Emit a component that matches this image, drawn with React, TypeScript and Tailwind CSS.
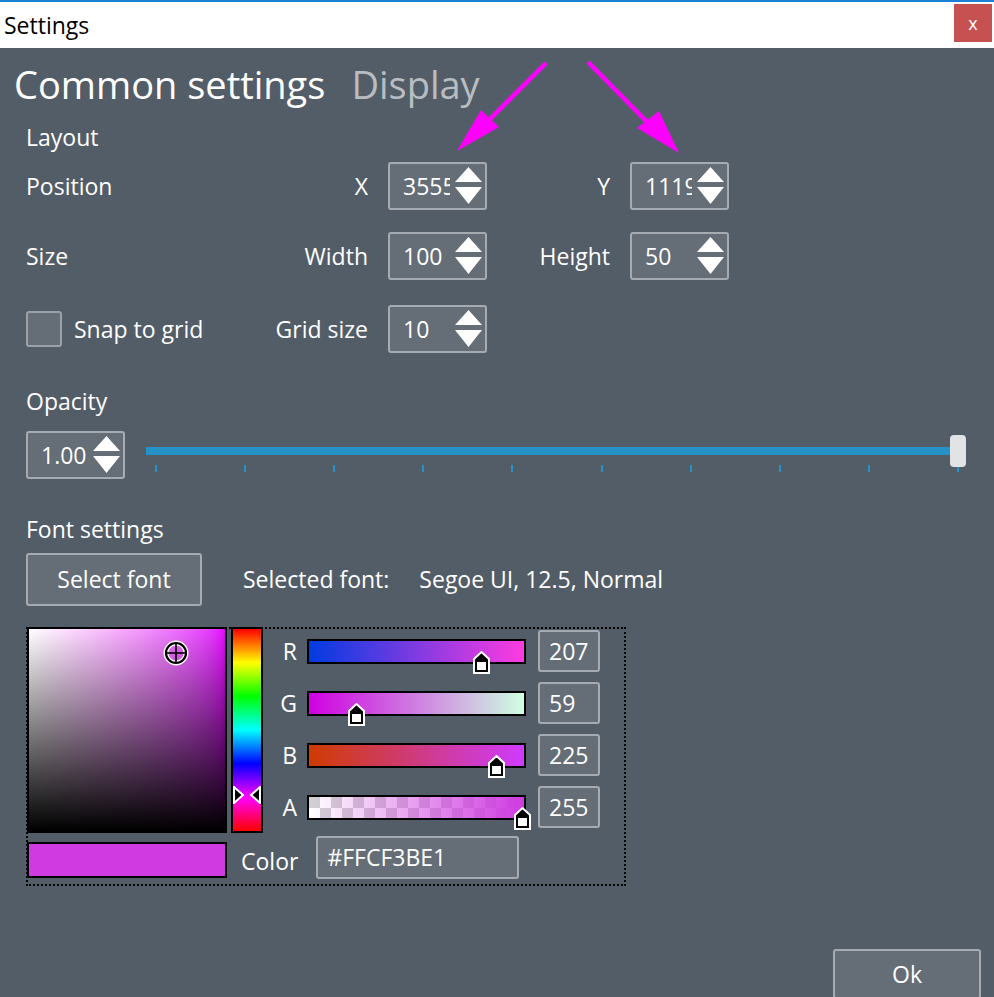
import React from "react";

const FONT = "font-['Open_Sans','Noto_Sans',sans-serif]";

function Arrows() {
  return (
    <svg width="27" height="38" viewBox="0 0 27 38" className="shrink-0">
      <polygon points="13.5,0 27,15 0,15" fill="#ffffff" />
      <polygon points="0,20 27,20 13.5,37" fill="#ffffff" />
    </svg>
  );
}

function Spin({ value, pl = "pl-[11px]" }: { value: string; pl?: string }) {
  return (
    <div
      className={`flex h-[48px] w-[99px] shrink-0 items-center rounded-[3px] border-2 border-[#a6abb1] bg-[#656d76] ${pl} pr-[3px]`}
    >
      <div className="mr-[5px] min-w-0 flex-1 overflow-hidden whitespace-nowrap text-[23px] leading-none text-white">
        {value}
      </div>
      <Arrows />
    </div>
  );
}

function Thumb({ value }: { value: number }) {
  const left = (value / 255) * 215 - 8.5 - 2;
  return (
    <svg
      width="17"
      height="23"
      viewBox="0 0 17 23"
      className="absolute top-[10px]"
      style={{ left }}
    >
      <path d="M8.5 1 L16 8 V22 H1 V8 Z" fill="#000000" stroke="#ffffff" strokeWidth="2" strokeLinejoin="miter" />
      <rect x="4" y="11" width="9" height="8" fill="#ffffff" />
    </svg>
  );
}

function ChannelRow({
  label,
  value,
  barClass,
  alpha,
}: {
  label: string;
  value: number;
  barClass: string;
  alpha?: boolean;
}) {
  return (
    <div className="flex h-[42px] items-center">
      <div className="w-[30px] text-right text-[23px] leading-none text-white">{label}</div>
      <div className="relative ml-[10px] h-[25px] w-[219px] border-2 border-black">
        {alpha ? (
          <div className="h-full w-full bg-[repeating-conic-gradient(#ffffff_0%_25%,#d2d2d2_0%_50%)] bg-[length:22px_22px]">
            <div className={`h-full w-full ${barClass}`} />
          </div>
        ) : (
          <div className={`h-full w-full ${barClass}`} />
        )}
        <Thumb value={value} />
      </div>
      <div className="ml-[12px] flex h-[42px] w-[62px] items-center rounded-[3px] border-2 border-[#a6abb1] bg-[#656d76] pl-[9px] text-[23px] leading-none text-white">
        {value}
      </div>
    </div>
  );
}

export default function App() {
  return (
    <div className={`relative flex h-[997px] w-[994px] flex-col overflow-hidden bg-[#535d68] ${FONT}`}>
      {/* Title bar */}
      <div className="flex h-[48px] shrink-0 items-start border-t-2 border-[#1c7fd6] bg-white">
        <div className="ml-[4px] mt-[9px] text-[23px] leading-[28px] text-black">Settings</div>
        <div className="ml-auto mr-[2px] mt-[2px] flex h-[38px] w-[38px] items-center justify-center bg-[#c75050] text-[18px] leading-none text-white">
          x
        </div>
      </div>

      {/* Body */}
      <div className="flex flex-1 flex-col text-white">
        <div className="ml-[14px] mt-[12px] flex items-baseline text-[38px] leading-[48px]">
          <span className="text-white">Common settings</span>
          <span className="ml-[26px] text-[#b9bdc2]">Display</span>
        </div>

        <div className="ml-[26px] mt-[15px] text-[23px] leading-[28px]">Layout</div>

        {/* Position row */}
        <div className="ml-[26px] mt-[11px] flex h-[48px] items-center text-[23px]">
          <div className="flex w-[342px] items-center justify-between">
            <span>Position</span>
            <span>X</span>
          </div>
          <div className="ml-[20px]">
            <Spin value="3555" pl="pl-[13px]" />
          </div>
          <div className="w-[123px] text-right">Y</div>
          <div className="ml-[20px]">
            <Spin value="1119" pl="pl-[13px]" />
          </div>
        </div>

        {/* Size row */}
        <div className="ml-[26px] mt-[22px] flex h-[48px] items-center text-[23px]">
          <div className="flex w-[342px] items-center justify-between">
            <span>Size</span>
            <span>Width</span>
          </div>
          <div className="ml-[20px]">
            <Spin value="100" pl="pl-[13px]" />
          </div>
          <div className="w-[123px] text-right">Height</div>
          <div className="ml-[20px]">
            <Spin value="50" pl="pl-[13px]" />
          </div>
        </div>

        {/* Snap row */}
        <div className="ml-[26px] mt-[25px] flex h-[48px] items-center text-[23px]">
          <div className="flex w-[342px] items-center justify-between">
            <div className="flex items-center">
              <div className="h-[36px] w-[36px] rounded-[3px] border-2 border-[#9ba1a7] bg-[#656d76]" />
              <span className="ml-[12px]">Snap to grid</span>
            </div>
            <span>Grid size</span>
          </div>
          <div className="ml-[20px]">
            <Spin value="10" pl="pl-[13px]" />
          </div>
        </div>

        <div className="ml-[26px] mt-[34px] text-[23px] leading-[28px]">Opacity</div>

        {/* Opacity row */}
        <div className="ml-[26px] mr-[28px] mt-[16px] flex h-[48px]">
          <Spin value="1.00" pl="pl-[13px]" />
          <div className="relative ml-[21px] h-[48px] flex-1">
            <div className="mr-[9px] mt-[16px] h-[8px] bg-[#2592c8]" />
            <div className="ml-[9px] mr-[7px] mt-[10px] flex justify-between">
              {Array.from({ length: 10 }).map((_, i) => (
                <div key={i} className="h-[7px] w-[2px] bg-[#2592c8]" />
              ))}
            </div>
            <div className="absolute right-0 top-[4px] h-[32px] w-[16px] rounded-[4px] bg-[#e2e3e5]" />
          </div>
        </div>

        <div className="ml-[26px] mt-[36px] text-[23px] leading-[28px]">Font settings</div>

        {/* Select font row */}
        <div className="ml-[26px] mt-[10px] flex items-center text-[23px]">
          <div className="flex h-[53px] w-[176px] items-center justify-center rounded-[3px] border-2 border-[#a6abb1] bg-[#656d76]">
            Select font
          </div>
          <span className="ml-[41px]">Selected font:</span>
          <span className="ml-[30px]">Segoe UI, 12.5, Normal</span>
        </div>

        {/* Color picker */}
        <div className="ml-[26px] mt-[21px] h-[259px] w-[600px] border-2 border-dotted border-black">
          <div className="-ml-[1px] -mt-[2px] flex flex-col">
            <div className="flex h-[206px]">
              {/* Spectrum */}
              <div className="relative h-[206px] w-[200px] border-2 border-black bg-linear-to-r from-white to-[#e300ff]">
                <div className="h-full w-full bg-linear-to-t from-black to-transparent" />
                <svg width="28" height="28" viewBox="0 0 28 28" className="absolute left-[133px] top-[10px]">
                  <circle cx="14" cy="14" r="10" fill="none" stroke="#ffffff" strokeWidth="5" />
                  <circle cx="14" cy="14" r="10" fill="none" stroke="#000000" strokeWidth="2.2" />
                  <line x1="14" y1="5" x2="14" y2="23" stroke="#000000" strokeWidth="1.6" />
                  <line x1="5" y1="14" x2="23" y2="14" stroke="#000000" strokeWidth="1.6" />
                </svg>
              </div>
              {/* Hue */}
              <div className="relative ml-[4px] h-[206px] w-[32px] border-2 border-black bg-[linear-gradient(to_bottom,#ff0000,#ffff00,#00ff00,#00ffff,#0000ff,#ff00ff,#ff0000)]">
                <svg width="28" height="18" viewBox="0 0 28 18" className="absolute left-0 top-[157px]">
                  <polygon points="1,1 10,9 1,17" fill="#000000" stroke="#ffffff" strokeWidth="2" />
                  <polygon points="27,1 18,9 27,17" fill="#000000" stroke="#ffffff" strokeWidth="2" />
                </svg>
              </div>
              {/* Channels */}
              <div className="ml-[4px] mt-[3px] flex flex-col gap-[10px]">
                <ChannelRow
                  label="R"
                  value={207}
                  barClass="bg-[linear-gradient(to_right,#003be1,#ff3be1)]"
                />
                <ChannelRow
                  label="G"
                  value={59}
                  barClass="bg-[linear-gradient(to_right,#cf00e1,#cfffe1)]"
                />
                <ChannelRow
                  label="B"
                  value={225}
                  barClass="bg-[linear-gradient(to_right,#cf3b00,#cf3bff)]"
                />
                <ChannelRow
                  label="A"
                  value={255}
                  alpha
                  barClass="bg-[linear-gradient(to_right,rgba(207,59,225,0),rgba(207,59,225,1))]"
                />
              </div>
            </div>
            <div className="flex items-start">
              <div className="mt-[9px] h-[36px] w-[200px] border-2 border-black bg-[#cf3be1]" />
              <div className="ml-[14px] mt-[14px] text-[23px] leading-[28px]">Color</div>
              <div className="ml-[18px] mt-[3px] flex h-[43px] w-[203px] items-center rounded-[3px] border-2 border-[#a6abb1] bg-[#656d76] pl-[9px] text-[23px] leading-none">
                #FFCF3BE1
              </div>
            </div>
          </div>
        </div>

        {/* Ok */}
        <div className="mr-[13px] mt-[63px] flex justify-end">
          <div className="flex h-[50px] w-[148px] items-center justify-center rounded-[3px] border-2 border-[#a6abb1] bg-[#656d76] text-[23px]">
            Ok
          </div>
        </div>
      </div>

      {/* Annotation arrows */}
      <svg
        width="994"
        height="997"
        viewBox="0 0 994 997"
        className="pointer-events-none absolute left-0 top-0"
      >
        <line x1="546" y1="63" x2="485" y2="124" stroke="#ff00ff" strokeWidth="4.5" />
        <polygon points="457,151 481,110 499,127" fill="#ff00ff" />
        <line x1="588" y1="62" x2="650" y2="125" stroke="#ff00ff" strokeWidth="4.5" />
        <polygon points="679,153 637,128 659,111" fill="#ff00ff" />
      </svg>
    </div>
  );
}
